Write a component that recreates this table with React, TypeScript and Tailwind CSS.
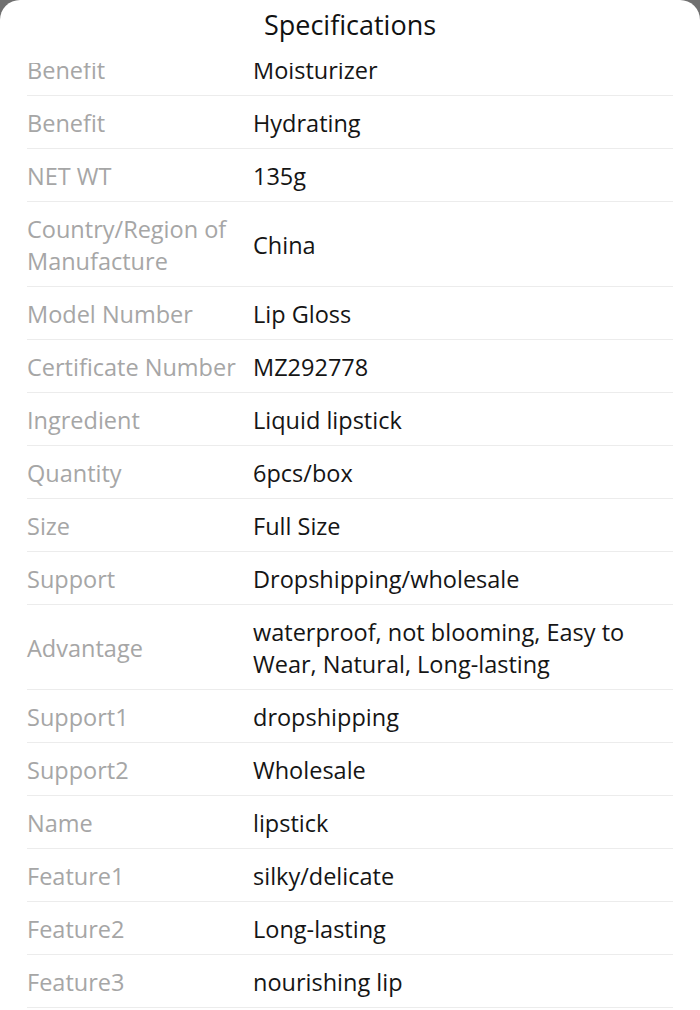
const specs: [string, string][] = [
  ["Benefit", "Moisturizer"],
  ["Benefit", "Hydrating"],
  ["NET WT", "135g"],
  ["Country/Region of Manufacture", "China"],
  ["Model Number", "Lip Gloss"],
  ["Certificate Number", "MZ292778"],
  ["Ingredient", "Liquid lipstick"],
  ["Quantity", "6pcs/box"],
  ["Size", "Full Size"],
  ["Support", "Dropshipping/wholesale"],
  ["Advantage", "waterproof, not blooming, Easy to Wear, Natural, Long-lasting"],
  ["Support1", "dropshipping"],
  ["Support2", "Wholesale"],
  ["Name", "lipstick"],
  ["Feature1", "silky/delicate"],
  ["Feature2", "Long-lasting"],
  ["Feature3", "nourishing lip"],
]

function SpecRow({ label, value }: { label: string; value: string }) {
  return (
    <div className="flex items-center border-b border-[#ececec] pt-[11px] pb-[9px] leading-[32px]">
      <div className="w-[226px] shrink-0 pr-2 text-[#a6a6a6]">{label}</div>
      <div className="flex-1 text-[#151515]">{value}</div>
    </div>
  )
}

export default function App() {
  return (
    <div
      className="w-[700px] h-[1010px] bg-[#707070] overflow-hidden"
      style={{ fontFamily: '"Open Sans", "Liberation Sans", sans-serif' }}
    >
      <div className="h-full flex flex-col bg-white rounded-t-[20px] overflow-hidden">
        <header className="h-[63px] shrink-0 flex items-start justify-center pt-[5px]">
          <h1 className="text-[27px] leading-[40px] text-[#111]">Specifications</h1>
        </header>

        <div className="flex-1 overflow-hidden px-[27px] text-[23.5px]">
          <div className="-mt-[20px]">
            {specs.map(([label, value], i) => (
              <SpecRow key={i} label={label} value={value} />
            ))}
          </div>
        </div>
      </div>
    </div>
  )
}
